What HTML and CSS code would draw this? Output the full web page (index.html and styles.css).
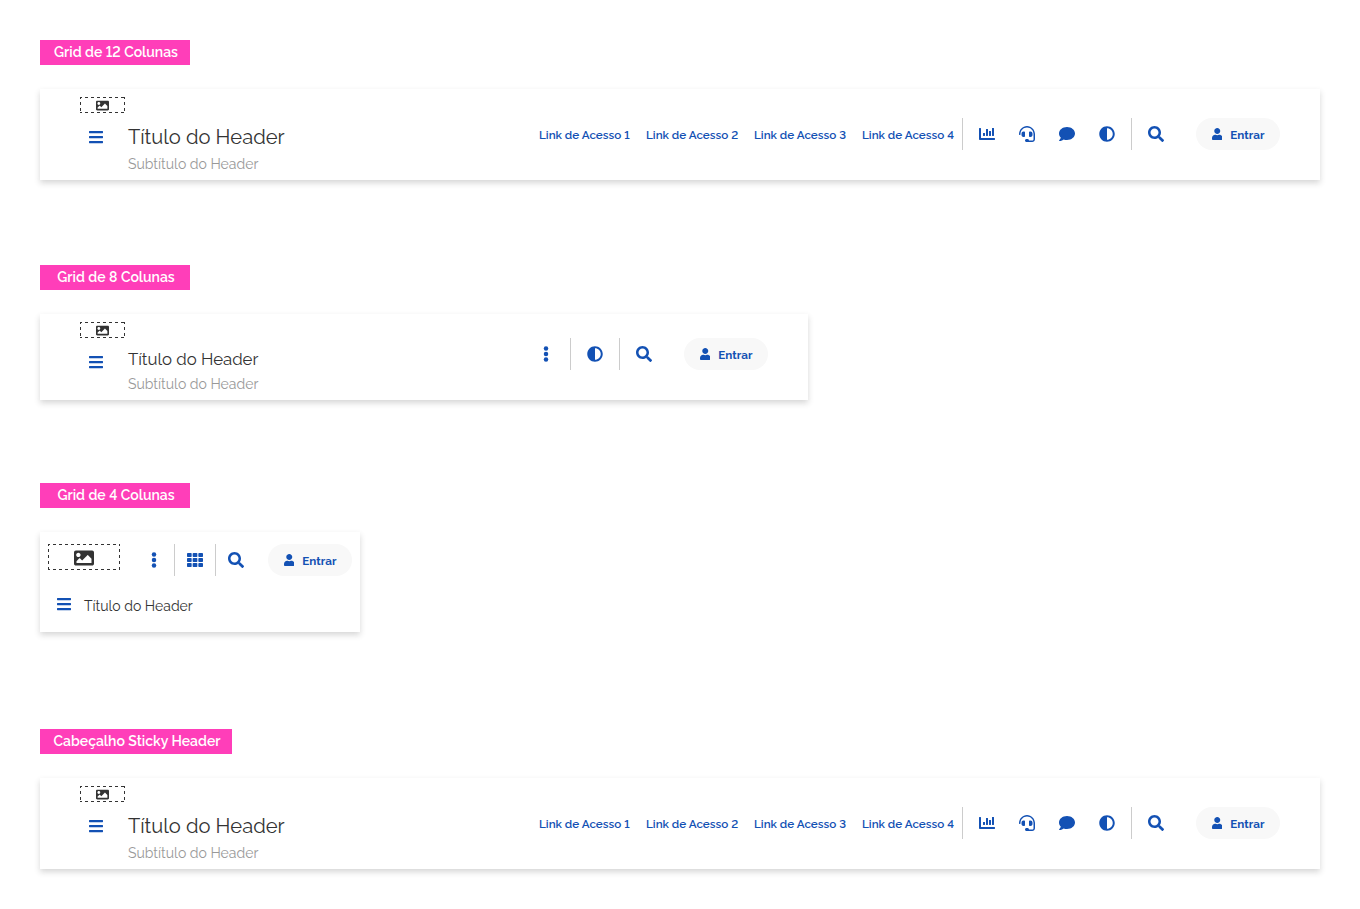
FILE: index.html
```
<!DOCTYPE html>
<html lang="pt-BR">
<head>
<meta charset="utf-8">
<title>Header</title>
<link rel="stylesheet" href="styles.css">
</head>
<body>
<svg class="sprite" aria-hidden="true">
<symbol id="bars" viewBox="0 0 448 512"><path d="M16 132h416c8.8 0 16-7.200 16-16V76c0-8.800-7.200-16-16-16H16C7.200 60 0 67.200 0 76v40c0 8.800 7.200 16 16 16zm0 160h416c8.800 0 16-7.200 16-16v-40c0-8.800-7.200-16-16-16H16c-8.800 0-16 7.200-16 16v40c0 8.800 7.200 16 16 16zm0 160h416c8.800 0 16-7.200 16-16v-40c0-8.800-7.200-16-16-16H16c-8.800 0-16 7.200-16 16v40c0 8.800 7.200 16 16 16z"/></symbol>
<symbol id="search" viewBox="0 0 512 512"><path d="M505 442.700L405.300 343c-4.500-4.500-10.600-7-17-7H372c27.600-35.300 44-79.700 44-128C416 93.100 322.900 0 208 0S0 93.100 0 208s93.100 208 208 208c48.300 0 92.700-16.400 128-44v16.300c0 6.400 2.500 12.500 7 17l99.700 99.700c9.400 9.400 24.600 9.400 33.900 0l28.300-28.300c9.400-9.400 9.400-24.600.1-34zM208 336c-70.700 0-128-57.200-128-128 0-70.700 57.200-128 128-128 70.700 0 128 57.200 128 128 0 70.700-57.200 128-128 128z"/></symbol>
<symbol id="user" viewBox="0 0 448 512"><path d="M224 256c70.700 0 128-57.300 128-128S294.700 0 224 0 96 57.300 96 128s57.300 128 128 128zm89.600 32h-16.700c-22.200 10.200-46.900 16-72.900 16s-50.600-5.800-72.900-16h-16.700C60.200 288 0 348.200 0 422.400V464c0 26.500 21.500 48 48 48h352c26.500 0 48-21.500 48-48v-41.600c0-74.200-60.200-134.400-134.400-134.400z"/></symbol>
<symbol id="adjust" viewBox="0 0 512 512"><path d="M8 256c0 137 111 248 248 248s248-111 248-248S393 8 256 8 8 119 8 256zm248 184V72c101.700 0 184 82.300 184 184 0 101.700-82.300 184-184 184z"/></symbol>
<symbol id="comment" viewBox="0 0 512 512"><path d="M256 32C114.600 32 0 125.100 0 240c0 49.600 21.400 95 57 130.700C44.500 421.100 2.700 466 2.200 466.500c-2.200 2.300-2.800 5.700-1.500 8.700S4.800 480 8 480c66.300 0 116-31.800 140.600-51.400 32.700 12.300 69 19.400 107.400 19.400 141.400 0 256-93.100 256-208S397.400 32 256 32z"/></symbol>
<symbol id="chart" viewBox="0 0 512 512"><path d="M332.800 320h38.400c6.400 0 12.800-6.400 12.800-12.800V172.800c0-6.400-6.400-12.800-12.800-12.800h-38.400c-6.400 0-12.800 6.400-12.800 12.800v134.400c0 6.400 6.400 12.800 12.800 12.800zm96 0h38.400c6.400 0 12.800-6.400 12.800-12.800V76.800c0-6.400-6.400-12.800-12.800-12.800h-38.400c-6.400 0-12.800 6.400-12.800 12.800v230.400c0 6.400 6.400 12.800 12.800 12.800zm-288 0h38.400c6.400 0 12.800-6.400 12.800-12.800v-70.400c0-6.400-6.400-12.800-12.800-12.800h-38.400c-6.400 0-12.800 6.400-12.800 12.800v70.400c0 6.400 6.400 12.800 12.800 12.800zm96 0h38.400c6.400 0 12.800-6.400 12.800-12.800V108.800c0-6.400-6.400-12.800-12.800-12.800h-38.400c-6.400 0-12.800 6.400-12.800 12.800v198.400c0 6.400 6.400 12.800 12.800 12.800zM496 384H64V80c0-8.800-7.200-16-16-16H16C7.200 64 0 71.200 0 80v336c0 17.700 14.300 32 32 32h464c8.800 0 16-7.200 16-16v-32c0-8.800-7.200-16-16-16z"/></symbol>
<symbol id="headset" viewBox="0 0 512 512"><path d="M192 208c0-17.700-14.300-32-32-32h-16c-35.400 0-64 28.700-64 64v48c0 35.400 28.700 64 64 64h16c17.700 0 32-14.300 32-32V208zm176 144c35.400 0 64-28.700 64-64v-48c0-35.400-28.700-64-64-64h-16c-17.700 0-32 14.300-32 32v112c0 17.700 14.300 32 32 32h16zM256 0C113.200 0 4.600 118.800 0 256v16c0 8.800 7.200 16 16 16h16c8.800 0 16-7.200 16-16v-16c0-114.700 93.300-208 208-208s208 93.300 208 208v165.700c0 23.400-18.900 42.300-42.300 42.300H320c0-26.500-21.500-48-48-48h-32c-26.500 0-48 21.500-48 48s21.500 48 48 48h181.700c49.900 0 90.300-40.400 90.300-90.300V256C507.400 118.800 398.800 0 256 0z"/></symbol>
<symbol id="image" viewBox="0 0 512 512"><path d="M464 448H48c-26.500 0-48-21.500-48-48V112c0-26.500 21.500-48 48-48h416c26.500 0 48 21.500 48 48v288c0 26.500-21.500 48-48 48zM112 120c-30.900 0-56 25.100-56 56s25.100 56 56 56 56-25.100 56-56-25.100-56-56-56zM64 384h384V272l-87.500-87.500c-4.700-4.700-12.300-4.700-17 0L208 320l-55.500-55.500c-4.700-4.700-12.300-4.700-17 0L64 336v48z"/></symbol>
<symbol id="dots" viewBox="0 0 192 512"><circle cx="96" cy="80" r="72"/><circle cx="96" cy="256" r="72"/><circle cx="96" cy="432" r="72"/></symbol>
<symbol id="grid" viewBox="0 0 512 512"><rect y="32" width="149" height="128" rx="24"/><rect x="181" y="32" width="150" height="128" rx="24"/><rect x="363" y="32" width="149" height="128" rx="24"/><rect y="192" width="149" height="128" rx="24"/><rect x="181" y="192" width="150" height="128" rx="24"/><rect x="363" y="192" width="149" height="128" rx="24"/><rect y="352" width="149" height="128" rx="24"/><rect x="181" y="352" width="150" height="128" rx="24"/><rect x="363" y="352" width="149" height="128" rx="24"/></symbol>
</svg>

<section class="example twelve">
<h2 class="tag">Grid de 12 Colunas</h2>
<header class="header">
<div class="brand">
<div class="logo"><svg><use href="#image"/></svg></div>
<div class="main"><button class="menu"><svg class="icon"><use href="#bars"/></svg></button>
<div><div class="title">Título do Header</div><div class="subtitle">Subtítulo do Header</div></div></div>
</div>
<div class="actions">
<nav class="links"><a>Link de Acesso 1</a><a>Link de Acesso 2</a><a>Link de Acesso 3</a><a>Link de Acesso 4</a></nav>
<div class="tools"><button><svg class="icon"><use href="#chart"/></svg></button><button><svg class="icon"><use href="#headset"/></svg></button><button><svg class="icon"><use href="#comment"/></svg></button><button><svg class="icon"><use href="#adjust"/></svg></button></div>
<div class="find"><button><svg class="icon"><use href="#search"/></svg></button></div>
<button class="sign"><svg><use href="#user"/></svg><span>Entrar</span></button>
</div>
</header>
</section>

<section class="example eight">
<h2 class="tag">Grid de 8 Colunas</h2>
<header class="header">
<div class="brand">
<div class="logo"><svg><use href="#image"/></svg></div>
<div class="main"><button class="menu"><svg class="icon"><use href="#bars"/></svg></button>
<div><div class="title">Título do Header</div><div class="subtitle">Subtítulo do Header</div></div></div>
</div>
<div class="actions">
<button class="more"><svg class="icon"><use href="#dots"/></svg></button>
<div class="tools"><button><svg class="icon"><use href="#adjust"/></svg></button></div>
<div class="find"><button><svg class="icon"><use href="#search"/></svg></button></div>
<button class="sign"><svg><use href="#user"/></svg><span>Entrar</span></button>
</div>
</header>
</section>

<section class="example four">
<h2 class="tag">Grid de 4 Colunas</h2>
<header class="header">
<div class="bar">
<div class="logo"><svg><use href="#image"/></svg></div>
<div class="actions">
<button class="more"><svg class="icon"><use href="#dots"/></svg></button>
<div class="tools"><button><svg class="icon"><use href="#grid"/></svg></button></div>
<div class="find"><button><svg class="icon"><use href="#search"/></svg></button></div>
<button class="sign"><svg><use href="#user"/></svg><span>Entrar</span></button>
</div>
</div>
<div class="main"><button class="menu"><svg class="icon"><use href="#bars"/></svg></button><div class="title">Título do Header</div></div>
</header>
</section>

<section class="example twelve sticky">
<h2 class="tag wide">Cabeçalho Sticky Header</h2>
<header class="header">
<div class="brand">
<div class="logo"><svg><use href="#image"/></svg></div>
<div class="main"><button class="menu"><svg class="icon"><use href="#bars"/></svg></button>
<div><div class="title">Título do Header</div><div class="subtitle">Subtítulo do Header</div></div></div>
</div>
<div class="actions">
<nav class="links"><a>Link de Acesso 1</a><a>Link de Acesso 2</a><a>Link de Acesso 3</a><a>Link de Acesso 4</a></nav>
<div class="tools"><button><svg class="icon"><use href="#chart"/></svg></button><button><svg class="icon"><use href="#headset"/></svg></button><button><svg class="icon"><use href="#comment"/></svg></button><button><svg class="icon"><use href="#adjust"/></svg></button></div>
<div class="find"><button><svg class="icon"><use href="#search"/></svg></button></div>
<button class="sign"><svg><use href="#user"/></svg><span>Entrar</span></button>
</div>
</header>
</section>
</body>
</html>
```
FILE: styles.css
```
* { box-sizing: border-box; }
body { margin: 0; padding: 40px; height: 909px; overflow: hidden; background: #fff; color: #333; font-family: Raleway, Lato, "Open Sans", sans-serif; font-variant-numeric: lining-nums; white-space: nowrap; }
.sprite { display: none; }
button { display: flex; align-items: center; justify-content: center; width: 32px; height: 32px; padding: 0; border: 0; background: none; color: #1351b4; font: inherit; }
svg { fill: currentColor; display: block; }
.icon { width: 16px; height: 16px; }
.tag { display: flex; align-items: center; justify-content: center; width: 150px; height: 25px; margin: 0 0 24px; padding-left: 2px; background: #ff3eb9; color: #fff; font-size: 14px; font-weight: 600; line-height: 25px; }
.tag.wide { width: 192px; }
.header { display: flex; justify-content: space-between; background: #fff; box-shadow: 0 3px 6px rgba(51, 51, 51, .2); }
.twelve .header { width: 1280px; height: 91px; padding: 8px 40px 0; }
.eight .header { width: 768px; height: 86px; padding: 8px 40px 0; }
.four .header { display: block; width: 320px; height: 100px; padding: 12px 8px 0; }
.eight { margin-top: 85px; }
.four { margin-top: 83px; }
.sticky { margin-top: 97px; }
.logo {
  --row: repeating-linear-gradient(90deg, #333 0 2px, transparent 2px 5px, #333 5px 6px);
  --col: repeating-linear-gradient(180deg, #333 0 2px, transparent 2px 5px, #333 5px 6px);
  display: flex; align-items: center; justify-content: center; width: 45px; height: 16px; padding-top: 1px;
  background: var(--row) top / 100% 1px no-repeat, var(--row) bottom / 100% 1px no-repeat, var(--col) left / 1px 100% no-repeat, var(--col) right / 1px 100% no-repeat;
}
.logo svg { width: 13px; height: 13px; }
.main { display: flex; align-items: flex-start; gap: 16px; padding-top: 8px; }
.title { height: 32px; font-size: 20.16px; line-height: 32px; font-weight: 400; }
.subtitle { height: 22px; font-size: 14px; line-height: 22px; color: #999; }
.eight .title { height: 27px; font-size: 16.8px; line-height: 27px; }
.actions { display: flex; height: 32px; margin-top: 21px; }
.eight .actions { margin-top: 16px; }
.links { display: flex; gap: 16px; padding-right: 8px; color: #1351b4; font-size: 11.67px; line-height: 34px; font-weight: 600; }
.links a { width: 92px; }
.links a:first-child { width: 91px; }
.tools { display: flex; gap: 8px; padding: 0 8px; border: solid #ccc; border-width: 0 1px; }
.find { padding: 0 24px 0 8px; }
.sign { gap: 8px; width: 84px; border-radius: 16px; background: #f8f8f8; font-size: 11.67px; font-weight: 700; }
.sign svg { width: 10.5px; height: 12px; }
.sign span { width: 34px; padding-top: 2px; }
.more { margin-right: 8px; }
.bar { display: flex; justify-content: space-between; height: 32px; }
.four .logo { width: 72px; height: 26px; }
.four .logo svg { width: 20px; height: 20px; }
.four .actions { margin: 0; }
.four .more { margin-right: 4px; }
.four .tools { padding: 0 4px; }
.four .find { padding: 0 16px 0 4px; }
.four .main { gap: 4px; padding-top: 12px; }
.four .title { padding-top: 2px; font-size: 14px; }
```
